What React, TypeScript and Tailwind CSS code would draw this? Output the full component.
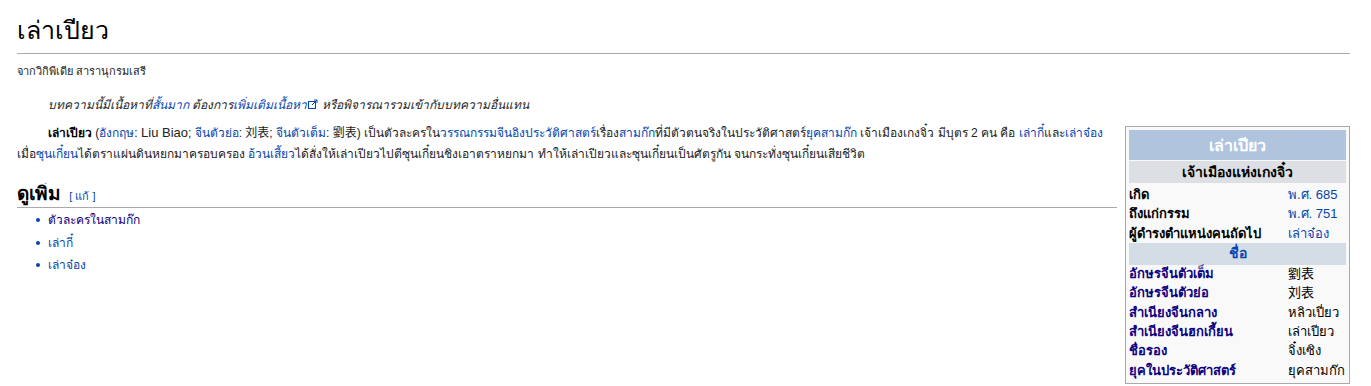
const link = "text-[#0645ad]";

function InfoRow({ label, value, labelLink = false, valueLink = false }: { label: string; value: string; labelLink?: boolean; valueLink?: boolean }) {
  return (
    <div className="grid grid-cols-[159px_1fr] h-[19.3px] items-center leading-none">
      <span className={`font-bold ${labelLink ? "text-[#0b0080]" : "text-black"}`}>{label}</span>
      <span className={valueLink ? link : "text-black"}>{value}</span>
    </div>
  );
}

function Infobox() {
  return (
    <div className="float-right w-[225px] mt-[11px] ml-[8px] border border-[#aaaaaa] bg-[#f9f9f9] p-[3px] text-[13px]">
      {/* title */}
      <div className="h-[30px] bg-[#b0c4de] flex items-center justify-center text-[16px] font-bold text-white">
        เล่าเปียว
      </div>
      <div className="mt-[1px] h-[22px] bg-[#dcdfe4] flex items-center justify-center text-[14px] font-bold text-black">
        เจ้าเมืองแห่งเกงจิ๋ว
      </div>
      <div className="pt-[2px]">
        <InfoRow label="เกิด" value="พ.ศ. 685" valueLink />
        <InfoRow label="ถึงแก่กรรม" value="พ.ศ. 751" valueLink />
        <InfoRow label="ผู้ดำรงตำแหน่งคนถัดไป" value="เล่าจ๋อง" valueLink />
      </div>
      <div className="h-[22px] bg-[#d4dce6] flex items-center justify-center text-[14px] font-bold text-[#0645ad]">
        ชื่อ
      </div>
      <div className="-mt-[1px]">
        <InfoRow label="อักษรจีนตัวเต็ม" value="劉表" labelLink />
        <InfoRow label="อักษรจีนตัวย่อ" value="刘表" labelLink />
        <InfoRow label="สำเนียงจีนกลาง" value="หลิวเปี่ยว" labelLink />
        <InfoRow label="สำเนียงจีนฮกเกี้ยน" value="เล่าเปียว" labelLink />
        <InfoRow label="ชื่อรอง" value="จิ๋งเซิง" labelLink />
        <InfoRow label="ยุคในประวัติศาสตร์" value="ยุคสามก๊ก" labelLink />
      </div>
    </div>
  );
}

export default function App() {
  return (
    <div
      className="bg-white text-[#222] pl-[17px] pr-[21px] pt-[14px] text-[12px] leading-[21px]"
      style={{ fontFamily: '"Liberation Sans", "Noto Sans", "Noto Sans CJK SC", sans-serif' }}
    >
      <h1 className="text-[25px] leading-[32px] text-black border-b border-[#aaaaaa] pb-[7px]">เล่าเปียว</h1>
      <div className="mt-[9px] text-[11px] leading-[16px]">จากวิกิพีเดีย สารานุกรมเสรี</div>

      <div className="mt-[16px] pl-[31px] italic leading-[20px]">
        บทความนี้มีเนื้อหาที่<span className={link}>สั้นมาก</span> ต้องการ<span className={link}>เพิ่มเติมเนื้อหา</span>
        <svg className="inline-block align-baseline ml-[1px]" width="10" height="10" viewBox="0 0 10 10">
          <rect x="0.5" y="2.5" width="7" height="7" fill="none" stroke="#0645ad" />
          <path d="M4 6 L9 1 M6 1 H9 V4" stroke="#0645ad" fill="none" />
        </svg>{" "}
        หรือพิจารณารวมเข้ากับบทความอื่นแทน
      </div>

      <Infobox />

      <p className="mt-[7px] indent-[31px]">
        <b className="text-black">เล่าเปียว</b> (<span className={link}>อังกฤษ</span>: <span className="text-[13px]">Liu Biao</span>; <span className={link}>จีนตัวย่อ</span>: 刘表;{" "}
        <span className={link}>จีนตัวเต็ม</span>: 劉表) เป็นตัวละครใน<span className={link}>วรรณกรรมจีนอิงประวัติศาสตร์</span>เรื่อง
        <span className={link}>สามก๊ก</span>ที่มีตัวตนจริงในประวัติศาสตร์<span className={link}>ยุคสามก๊ก</span> เจ้าเมืองเกงจิ๋ว มีบุตร 2 คน คือ{" "}
        <span className={link}>เล่ากี๋</span>และ<span className={link}>เล่าจ๋อง</span> เมื่อ<span className={link}>ซุนเกี๋ยน</span>ได้ตราแผ่นดินหยกมาครอบครอง{" "}
        <span className={link}>อ้วนเสี้ยว</span>ได้สั่งให้เล่าเปียวไปตีซุนเกี๋ยนชิงเอาตราหยกมา ทำให้เล่าเปียวและซุนเกี๋ยนเป็นศัตรูกัน จนกระทั่งซุนเกี๋ยนเสียชีวิต
      </p>

      <h2 className="mt-[18px] overflow-hidden border-b border-[#aaaaaa] text-[19px] leading-[21px] font-bold text-black">
        ดูเพิ่ม <span className="ml-[3px] text-[11px] font-normal text-[#0645ad]">[ แก้ ]</span>
      </h2>

      <ul className="mt-[1px] pl-[19px] leading-[22.5px]">
        {["ตัวละครในสามก๊ก", "เล่ากี๋", "เล่าจ๋อง"].map((t, i) => (
          <li key={t} className="flex items-center gap-[8px]">
            <span className="w-[4px] h-[4px] rounded-full bg-[#0645ad]" />
            <span className={i === 0 ? "text-[#0b0080]" : link}>{t}</span>
          </li>
        ))}
      </ul>
    </div>
  );
}
